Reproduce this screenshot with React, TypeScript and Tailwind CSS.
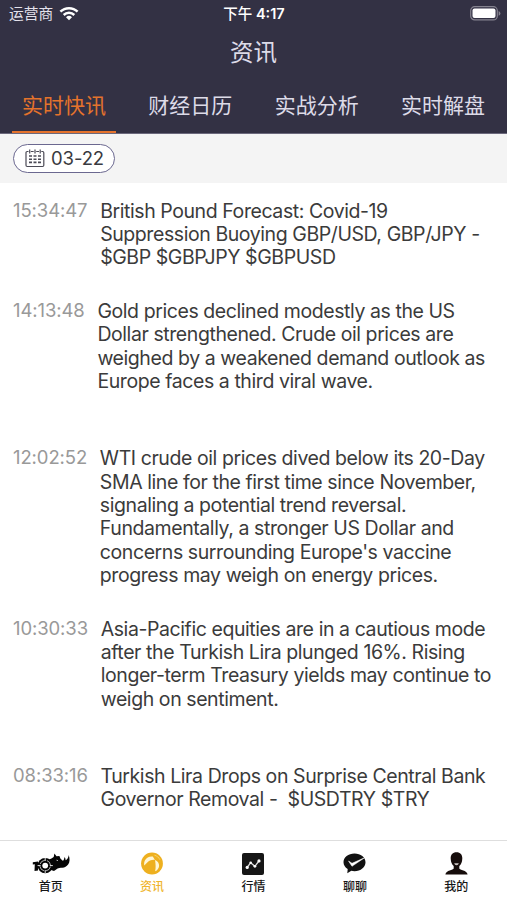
import { clsx } from "clsx";

interface NewsItem {
  time: string;
  lines: string[];
}

const tabs = ["实时快讯", "财经日历", "实战分析", "实时解盘"];

const news: NewsItem[] = [
  {
    time: "15:34:47",
    lines: [
      "British Pound Forecast: Covid-19",
      "Suppression Buoying GBP/USD, GBP/JPY -",
      "$GBP $GBPJPY $GBPUSD",
    ],
  },
  {
    time: "14:13:48",
    lines: [
      "Gold prices declined modestly as the US",
      "Dollar strengthened. Crude oil prices are",
      "weighed by a weakened demand outlook as",
      "Europe faces a third viral wave.",
      "",
    ],
  },
  {
    time: "12:02:52",
    lines: [
      "WTI crude oil prices dived below its 20-Day",
      "SMA line for the first time since November,",
      "signaling a potential trend reversal.",
      "Fundamentally, a stronger US Dollar and",
      "concerns surrounding Europe's vaccine",
      "progress may weigh on energy prices.",
    ],
  },
  {
    time: "10:30:33",
    lines: [
      "Asia-Pacific equities are in a cautious mode",
      "after the Turkish Lira plunged 16%. Rising",
      "longer-term Treasury yields may continue to",
      "weigh on sentiment.",
      "",
    ],
  },
  {
    time: "08:33:16",
    lines: [
      "Turkish Lira Drops on Surprise Central Bank",
      "Governor Removal -  $USDTRY $TRY",
    ],
  },
];

function WifiIcon() {
  return (
    <svg width="20" height="15" viewBox="0 0 20 15" fill="none" stroke="#fff" strokeWidth="2.5">
      <path d="M1.4 5.6a12.4 12.4 0 0 1 17.2 0" />
      <path d="M4.7 9a7.6 7.6 0 0 1 10.6 0" />
      <path d="M10 14.2 7 11.3a4.3 4.3 0 0 1 6 0z" fill="#fff" stroke="none" />
    </svg>
  );
}

function BatteryIcon() {
  return (
    <svg width="31" height="15" viewBox="0 0 31 15">
      <rect x="0.7" y="0.7" width="26.6" height="13.2" rx="4" fill="none" stroke="#85838f" strokeWidth="1.2" />
      <rect x="2.5" y="2.5" width="23" height="9.6" rx="2" fill="#fff" />
      <path d="M28.6 5v4.8q1.8-.7 1.8-2.4T28.6 5z" fill="#85838f" />
    </svg>
  );
}

function CalendarIcon() {
  return (
    <svg width="20" height="19" viewBox="0 0 20 19" fill="none" stroke="#4b4a55" strokeWidth="1.2">
      <path d="M3.5 2.5H2.2A1.2 1.2 0 0 0 1 3.7v12.6a1.2 1.2 0 0 0 1.2 1.2h15.4a1.2 1.2 0 0 0 1.2-1.2V3.7a1.2 1.2 0 0 0-1.2-1.2h-1.3M5.8 2.5h2.9M11.2 2.5H14" />
      <path d="M4.7.5v4M10 .5v4M15.2.5v4" />
      <path d="M4 7h12M4 10.2h12M4 13.4h12" strokeWidth="1.6" strokeDasharray="3 1.5" />
    </svg>
  );
}

function RhinoIcon() {
  return (
    <svg width="38" height="22" viewBox="0 0 38 22">
      <g fill="#050505">
        <path d="M.8 9.2 6 8.500v9l-3.500.5.300-6.800-2 .3z" />
        <circle cx="13.2" cy="12.6" r="7.700" />
        <path d="M17 6.500c1.800-.5 3.200-1.200 4.700-2.500L22.400.6l2.100 2.600 2.900-.1 1 2.300 2 2.200c1.100.3 1.800-.8 1.900-3.400 1.100.7 1.400 1.800 1.200 3 2-.8 3-2.500 3.200-5.200 1.300 3.700 1.200 7.300-.6 9.600-1.600 2.200-3.800 3.400-6.600 3.100-2.500-.2-4.700 1-7.500 3.300l-3-1z" />
      </g>
      <circle cx="13.2" cy="12.6" r="5.300" fill="none" stroke="#fff" strokeWidth=".7" strokeDasharray="6 2.325" strokeDashoffset="-1.160" />
      <circle cx="13.2" cy="12.6" r="2.900" fill="#fff" />
      <path d="M13.200 5v3M13.200 17v3M5.600 12.600h3M17.800 12.600h3" stroke="#fff" strokeWidth=".9" />
      <path d="m24.500 7.200 1.500.4" stroke="#fff" strokeWidth=".7" />
    </svg>
  );
}

function GlobeIcon() {
  return (
    <svg width="22" height="23" viewBox="0 0 22 23">
      <circle cx="11" cy="11.500" r="10.900" fill="#eeb01f" />
      <path d="M4 8.200C5.500 5.500 8.400 4.100 11.800 4.500l2.200 3.400c-3.500-.3-6 .8-8.200 3.200-.9 1-1.700 1.700-2.500 2.500-.4-2-.2-3.800.7-5.400z" fill="#fff6d5" />
      <path d="M14 7.900c2.700 1 4.200 3.100 4.100 5.800-.1 2.500-1.600 4.600-4 5.600.8-3.300.6-7.500-.1-11.400z" fill="#fff6d5" />
      <path d="M13.500 3.200c2.400.7 4.300 2.200 5.400 4.500" stroke="#f8d36b" strokeWidth="1" fill="none" />
    </svg>
  );
}

function ChartIcon() {
  return (
    <svg width="22" height="22" viewBox="0 0 22 22">
      <rect width="22" height="22" rx="2" fill="#161616" />
      <path d="m5.200 14.300 3.400-4.500 4.300 3.500 4-5.300" stroke="#ddd" strokeWidth="1.3" fill="none" />
      <g fill="#fff">
        <circle cx="5.2" cy="14.4" r="1.6" />
        <circle cx="8.7" cy="9.8" r="1.3" />
        <circle cx="12.9" cy="13.3" r="1.4" />
        <circle cx="17" cy="7.9" r="1.6" />
      </g>
    </svg>
  );
}

function ChatIcon() {
  return (
    <svg width="23" height="21" viewBox="0 0 23 21">
      <path d="M11.500.5C17.700.5 22.500 4.300 22.500 9.300s-4.800 8.900-11 8.900c-1.100 0-2.200-.1-3.200-.4L4.300 20.300l.4-4.200C2.100 14.500.5 12 .5 9.300.5 4.300 5.300.5 11.500.5z" fill="#111" />
      <path d="M5.500 8 9 10.300 21.500 4.800 9 13.300z" fill="#fff" stroke="#fff" strokeWidth=".5" />
    </svg>
  );
}

function ProfileIcon() {
  return (
    <svg width="23" height="23" viewBox="0 0 23 23">
      <path d="M11.500.3c3.800 0 5.900 2.500 5.800 6.100-.1 3.300-1.200 6.200-3 7.700v2.300c.3 1.500 7.700 1.500 8.300 6.100H.4C1 17.900 8.400 17.900 8.700 16.400v-2.300c-1.800-1.500-2.900-4.400-3-7.700C5.600 2.800 7.700.3 11.500.3z" fill="#160d0b" />
      <path d="M9.200 11.300h4.600c-.4 1.300-1.200 1.900-2.300 1.900s-1.900-.6-2.300-1.900z" fill="#cfc9c7" />
    </svg>
  );
}

const navItems = [
  { label: "首页", icon: <RhinoIcon /> },
  { label: "资讯", icon: <GlobeIcon />, active: true },
  { label: "行情", icon: <ChartIcon /> },
  { label: "聊聊", icon: <ChatIcon /> },
  { label: "我的", icon: <ProfileIcon /> },
];

export default function App() {
  return (
    <div className="flex h-[900px] w-[507px] flex-col overflow-hidden bg-white font-[Inter,'Noto_Sans_CJK_SC',sans-serif]">
      <header className="flex h-[134px] shrink-0 flex-col border-b border-[#6b687c] bg-[#333144] text-[#dddbe8]">
        {/* Status bar */}
        <div className="grid h-[27px] grid-cols-3 items-center pr-[6px] pl-[9px] text-white">
          <div className="flex items-center gap-[6px] text-[14.7px] text-[#e4e2ec]">
            <span className="pt-px">运营商</span>
            <WifiIcon />
          </div>
          <div className="pr-[2px] text-center text-[14.5px] font-semibold whitespace-nowrap">
            <span className="font-medium">下午</span> 4:17
          </div>
          <div className="flex justify-end">
            <BatteryIcon />
          </div>
        </div>
        <h1 className="h-[51px] pt-[1px] text-center text-[23.5px] leading-[50px]">资讯</h1>
        <nav className="flex flex-1 justify-between px-3">
          {tabs.map((tab, i) => (
            <button
              key={tab}
              className={clsx(
                "w-[104px] border-b-2 pt-[3px] text-[21px] whitespace-nowrap",
                i === 0 ? "border-[#e5732c] text-[#e5732c]" : "border-transparent"
              )}
            >
              {tab}
            </button>
          ))}
        </nav>
      </header>

      <div className="flex h-[49px] shrink-0 items-center bg-[#f4f4f4] pl-[13px]">
        <button className="flex h-[29px] w-[102px] items-center gap-[6px] rounded-full border-[1.5px] border-[#6b6890] bg-white pl-[11px] text-[18.5px] tracking-[-0.1px] text-[#3a3a40]">
          <CalendarIcon />
          <span className="pt-px">03-22</span>
        </button>
      </div>

      <main className="flex min-h-0 flex-1 flex-col gap-[30.7px] overflow-hidden pt-[16.6px] pl-[13px] leading-[23.3px]">
        {news.map((item) => (
          <article key={item.time} className="flex gap-[12.7px]">
            <time className="-mt-px shrink-0 text-[18.5px] tracking-[-0.1px] text-[#999]">{item.time}</time>
            <div className="text-[19.5px] tracking-[-0.42px] whitespace-pre text-[#3b3b3b]">
              {item.lines.map((line, i) => (
                <p key={i} className="h-[23.3px]">
                  {line}
                </p>
              ))}
            </div>
          </article>
        ))}
      </main>

      <footer className="grid h-[60px] shrink-0 grid-cols-5 border-t border-[#dedede] bg-white">
        {navItems.map((item) => (
          <button
            key={item.label}
            className={clsx(
              "flex flex-col items-center pt-[10px] text-[12px] leading-[21px] font-medium",
              item.active ? "text-[#efb52d]" : "text-[#161616]"
            )}
          >
            <span className="flex h-[25px] items-center">{item.icon}</span>
            {item.label}
          </button>
        ))}
      </footer>
    </div>
  );
}
